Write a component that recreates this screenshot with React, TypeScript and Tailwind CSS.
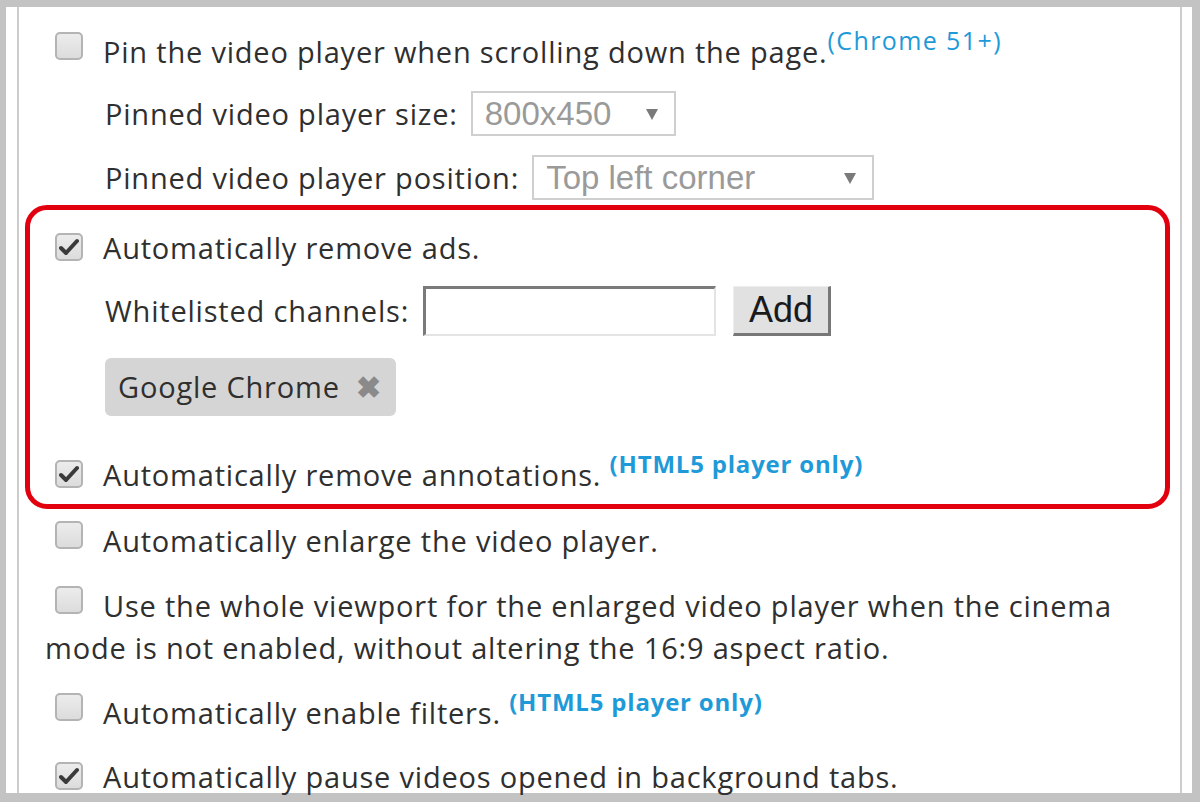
import React from "react";

const font = { fontFamily: '"Open Sans", "Noto Sans", sans-serif' };
const arial = { fontFamily: '"Liberation Sans", Arial, sans-serif' };

function Box({ checked = false }: { checked?: boolean }) {
  return (
    <span className="ml-[10px] mr-[20px] inline-flex h-[28px] w-[28px] items-center justify-center rounded-[5px] border-2 border-[#b4b4b4] bg-gradient-to-b from-[#ececec] to-[#dcdcdc] align-[3px]">
      {checked && (
        <svg width="20" height="18" viewBox="0 0 20 18">
          <path d="M2 10 L7 15 L18 3" fill="none" stroke="#3a3a3a" strokeWidth="4" strokeLinecap="round" strokeLinejoin="round" />
        </svg>
      )}
    </span>
  );
}

function Note({ bold = false, children }: { bold?: boolean; children: React.ReactNode }) {
  return (
    <span
      className={`leading-[0] text-[#1f9ad8] align-[13px] ${
        bold ? "text-[24px] font-bold tracking-[0.8px]" : "text-[25px] tracking-[1.4px]"
      }`}
    >
      {children}
    </span>
  );
}

function Select({ value, width }: { value: string; width: string }) {
  return (
    <div className={`flex h-[45px] ${width} items-center justify-between border-2 border-[#cfcfcf] bg-white pl-[12px] pr-[16px]`} style={arial}>
      <span className="text-[33px] tracking-normal text-[#9a9a9a]">{value}</span>
      <svg width="12" height="12" viewBox="0 0 12 12">
        <path d="M0 1 H12 L6 12 Z" fill="#7a7a7a" />
      </svg>
    </div>
  );
}

export default function App() {
  return (
    <div className="h-[802px] w-[1200px] overflow-hidden bg-[#c3c3c3] pb-[9px] pl-[6px] pr-[8px] pt-[7px]" style={font}>
      <div className="h-full bg-white pl-[11px] pr-[10px]">
        <div className="h-full border-x-2 border-[#cdcdcd] pl-[26px] pt-[24px] text-[29px] leading-[42px] tracking-[0.8px] text-[#2f2f2f]">
          {/* Pin player */}
          <div className="h-[42px] whitespace-nowrap">
            <Box />
            Pin the video player when scrolling down the page.<Note>(Chrome 51+)</Note>
          </div>
          <div className="mt-[18px] flex items-center pl-[60px]">
            <span className="mr-[13px]">Pinned video player size:</span>
            <Select value="800x450" width="w-[205px]" />
          </div>
          <div className="mt-[19px] flex items-center pl-[60px]">
            <span className="mr-[13px]">Pinned video player position:</span>
            <Select value="Top left corner" width="w-[342px]" />
          </div>

          {/* highlighted group */}
          <div className="-ml-[20px] mr-[10px] mt-[5px] rounded-[22px] border-[5px] border-[#e2000f] pb-[8px] pl-[15px] pt-[17px]">
            <div className="h-[42px]">
              <Box checked />
              Automatically remove ads.
            </div>
            <div className="mt-[17px] flex items-center pl-[60px]">
              <span className="mr-[14px]">Whitelisted channels:</span>
              <div className="h-[50px] w-[293px] border-b-2 border-l-[3px] border-r-2 border-t-[3px] border-b-[#e4e4e4] border-l-[#7a7a7a] border-r-[#e4e4e4] border-t-[#7a7a7a] bg-white" />
              <button
                className="ml-[17px] flex h-[50px] w-[98px] items-center justify-center border-b-[3px] border-l border-r-[3px] border-t border-b-[#777] border-l-[#eee] border-r-[#777] border-t-[#eee] bg-[#e1e1e1] text-[36px] tracking-normal text-[#1a1a1a]"
                style={arial}
              >
                Add
              </button>
            </div>
            <div className="mt-[22px] pl-[60px]">
              <div className="inline-flex h-[58px] items-center rounded-[6px] bg-[#d5d5d5] pl-[13px] pr-[14px]">
                <span>Google Chrome</span>
                <span className="ml-[16px] text-[30px] font-bold leading-none text-[#8a8a8a]">✖</span>
              </div>
            </div>
            <div className="mt-[38px] h-[42px] whitespace-nowrap">
              <Box checked />
              Automatically remove annotations. <Note bold>(HTML5 player only)</Note>
            </div>
          </div>

          <div className="mt-[11px] h-[42px]">
            <Box />
            Automatically enlarge the video player.
          </div>
          <div className="mt-[23px] w-[1080px]">
            <Box />
            Use the whole viewport for the enlarged video player when the cinema mode is not enabled, without altering the 16:9 aspect ratio.
          </div>
          <div className="mt-[23px] h-[42px] whitespace-nowrap">
            <Box />
            Automatically enable filters. <Note bold>(HTML5 player only)</Note>
          </div>
          <div className="mt-[22px] h-[42px]">
            <Box checked />
            Automatically pause videos opened in background tabs.
          </div>
        </div>
      </div>
    </div>
  );
}
